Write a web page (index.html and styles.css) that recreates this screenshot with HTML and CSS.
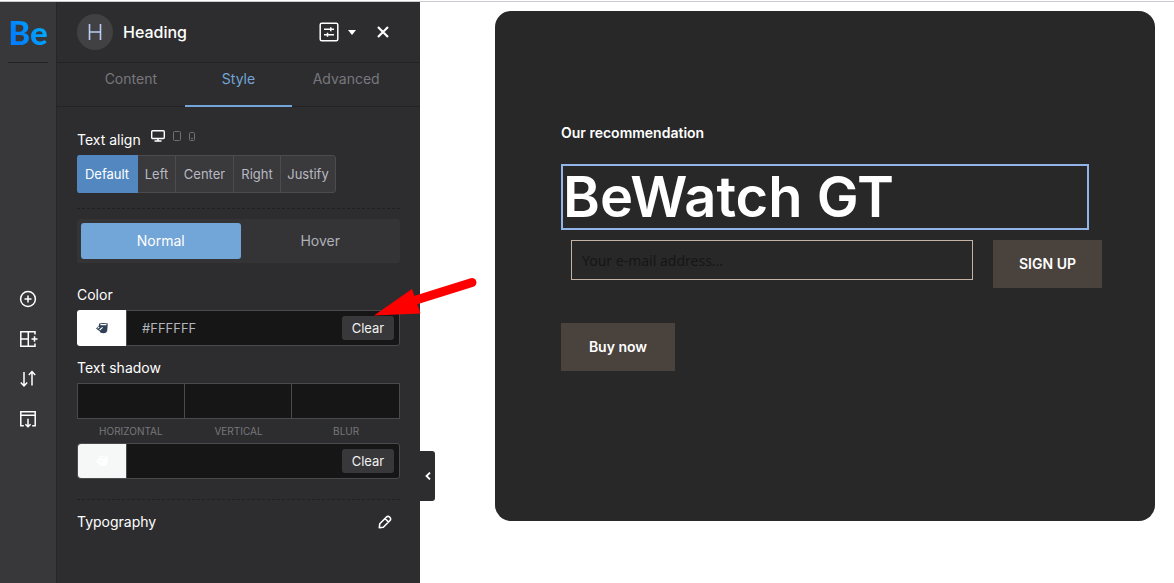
FILE: index.html
```html
<!DOCTYPE html>
<html lang="en">
<head>
<meta charset="utf-8">
<meta name="viewport" content="width=device-width, initial-scale=1">
<title>Heading – BeBuilder</title>
<link rel="stylesheet" href="styles.css">
</head>
<body>
<div class="app">
  <nav class="rail" aria-label="Builder">
    <a class="logo" href="#">Be</a>
    <div class="rail-items">
      <button class="rail-btn" type="button" aria-label="Add element">
        <svg class="icon" width="20" height="20" viewBox="0 0 20 20"><circle cx="10" cy="10" r="7.4"/><path d="M10 6.500v7M6.500 10h7"/></svg>
      </button>
      <button class="rail-btn" type="button" aria-label="Sections">
        <svg class="icon" width="20" height="20" viewBox="0 0 20 20"><path d="M17 5.500V2.800H2.800v14.400H17v-2.700M2.800 10h7.500M10.300 2.800v14.400M13.500 10h6M16.500 7.200v5.600"/></svg>
      </button>
      <button class="rail-btn" type="button" aria-label="Reorder">
        <svg class="icon" width="20" height="20" viewBox="0 0 20 20"><path d="M6 3v14M2.800 13.600L6 17l3.200-3.400M14 16.500V2.500M10.800 6L14 2.600 17.200 6"/></svg>
      </button>
      <button class="rail-btn" type="button" aria-label="Export">
        <svg class="icon" width="20" height="20" viewBox="0 0 20 20"><path d="M5.800 16.700H2.800V2.800h14.400v13.900h-3M2.800 6.200h14.400M10 9.800v7.800M7.400 15.200l2.600 2.600 2.600-2.600"/></svg>
      </button>
    </div>
  </nav>

  <aside class="panel">
    <header class="panel-head">
      <span class="badge"><svg width="16" height="18" viewBox="0 0 16 18"><path d="M2.500 1v16M13.500 1v16M2.500 9h11"/></svg></span>
      <h2 class="panel-title">Heading</h2>
      <button class="head-btn" type="button" aria-label="Presets">
        <svg class="icon" width="20" height="20" viewBox="0 0 20 20"><rect x="1.200" y="1.200" width="17.600" height="17.600" rx="1.500"/><path d="M5 7.200h10M11.800 5.200v4M5 12.800h10M8.500 10.800v4"/></svg>
        <svg width="8" height="5" viewBox="0 0 8 5"><path d="M0 0h8L4 5z" fill="#fff"/></svg>
      </button>
      <button class="close-btn" type="button" aria-label="Close">
        <svg width="12" height="12" viewBox="0 0 12 12"><path d="M1 1l10 10M11 1L1 11" stroke="#fff" stroke-width="2.200"/></svg>
      </button>
    </header>

    <div class="tabs" role="tablist">
      <button class="tab" role="tab" type="button">Content</button>
      <button class="tab tab-active" role="tab" type="button" aria-selected="true">Style</button>
      <button class="tab" role="tab" type="button">Advanced</button>
    </div>

    <div class="panel-body">
      <div class="label-row">
        <span class="label">Text align</span>
        <span class="devices">
          <svg class="device device-on" width="14" height="12" viewBox="0 0 14 12"><rect x=".7" y=".7" width="12.600" height="7.800" rx="1"/><path d="M7 8.500v2.500M3.500 11h7" stroke-width="1.600"/></svg>
          <svg class="device" width="8" height="12" viewBox="0 0 8 12"><rect x=".5" y="1.500" width="7" height="9" rx="1"/></svg>
          <svg class="device" width="6" height="12" viewBox="0 0 6 12"><rect x=".5" y="2.500" width="5" height="8" rx="1"/><path d="M2 8.500h2"/></svg>
        </span>
      </div>
      <div class="segments" role="group" aria-label="Text align">
        <button class="seg seg-active" type="button">Default</button>
        <button class="seg" type="button">Left</button>
        <button class="seg" type="button">Center</button>
        <button class="seg" type="button">Right</button>
        <button class="seg" type="button">Justify</button>
      </div>

      <hr class="divider">

      <div class="states">
        <button class="state state-active" type="button">Normal</button>
        <button class="state" type="button">Hover</button>
      </div>

      <label class="label" for="color">Color</label>
      <div class="color-field">
        <button class="swatch" type="button" aria-label="Pick color">
          <svg width="14" height="12" viewBox="0 0 14 12"><path d="M4.200 1.500Q8 .3 12.800 1.500L12.200 9Q11.500 11.300 8.500 11.300 5 11.200 4.600 9L3.600 8.600 1 6.500 3.800 3.800z" fill="currentColor"/><path d="M5.400 2.600h6M4.600 8L7.600 5.400M2.600 6.300l1.600-1.500" fill="none" stroke="#fff" stroke-width="1.100"/></svg>
        </button>
        <input class="color-input" id="color" type="text" value="#FFFFFF">
        <button class="clear" type="button">Clear</button>
      </div>

      <span class="label label-shadow">Text shadow</span>
      <div class="shadow-grid">
        <div class="shadow-cell"><input class="num" id="sh-h" type="text"><label class="caption" for="sh-h">HORIZONTAL</label></div>
        <div class="shadow-cell"><input class="num" id="sh-v" type="text"><label class="caption" for="sh-v">VERTICAL</label></div>
        <div class="shadow-cell"><input class="num" id="sh-b" type="text"><label class="caption" for="sh-b">BLUR</label></div>
      </div>
      <div class="color-field">
        <button class="swatch swatch-empty" type="button" aria-label="Pick shadow color">
          <svg width="14" height="12" viewBox="0 0 14 12"><path d="M4.200 1.500Q8 .3 12.800 1.500L12.200 9Q11.500 11.300 8.500 11.300 5 11.200 4.600 9L3.600 8.600 1 6.500 3.800 3.800z" fill="currentColor"/><path d="M5.400 2.600h6M4.600 8L7.600 5.400M2.600 6.300l1.600-1.500" fill="none" stroke="#f6f8f8" stroke-width="1.100"/></svg>
        </button>
        <input class="color-input" type="text" aria-label="Shadow color">
        <button class="clear" type="button">Clear</button>
      </div>

      <hr class="divider divider-low">

      <button class="typo" type="button">Typography
        <svg class="typo-icon" width="14" height="14" viewBox="0 0 14 14"><path d="M1.300 12.700l.5-4L8.500 2a2.100 2.100 0 0 1 3 0l.5.5a2.100 2.100 0 0 1 0 3L5.300 12.200zM7 3.500L10.500 7"/></svg>
      </button>
    </div>

    <button class="collapse" type="button" aria-label="Collapse panel">
      <svg width="6" height="8" viewBox="0 0 6 8"><path d="M5 .6L1.500 4 5 7.400" fill="none" stroke="#fff" stroke-width="1.800"/></svg>
    </button>
    <svg class="pointer" width="110" height="44" viewBox="0 0 110 44" aria-hidden="true"><path d="M46 25L102 7.500" stroke="#f00" stroke-width="9" stroke-linecap="round"/><path d="M4 40.500L42 14l8.500 24.500z" fill="#f00"/></svg>
  </aside>

  <main class="canvas">
    <section class="card">
      <p class="eyebrow">Our recommendation</p>
      <h1 class="title">BeWatch GT</h1>
      <form class="signup">
        <input class="email" type="email" placeholder="Your e-mail address..." aria-label="E-mail address">
        <button class="cta cta-signup" type="submit">SIGN UP</button>
      </form>
      <button class="cta cta-buy" type="button">Buy now</button>
    </section>
  </main>
</div>
</body>
</html>
```
FILE: styles.css
```css
* { box-sizing: border-box; }

body {
  margin: 0;
  padding-top: 1px;
  background: #fff;
  color: #fff;
  font-family: Inter, "Liberation Sans", sans-serif;
  font-size: 14px;
  line-height: 20px;
}

button, input { font: inherit; color: inherit; }
button { border: 0; padding: 0; background: none; cursor: pointer; }
svg { display: block; }

.app {
  display: flex;
  min-height: calc(100vh - 1px);
  border-top: 1px solid #c8cbcf;
}

.icon { fill: none; stroke: #fff; stroke-width: 1.5; }

/* Left rail */
.rail {
  flex: 0 0 57px;
  min-width: 0;
  padding: 0 8px;
  background: #38383a;
  border-right: 1px solid #262628;
}
.logo {
  display: block;
  height: 61px;
  border-bottom: 1px solid #232324;
  font: 900 33px/60px Lato, sans-serif;
  text-align: center;
  text-decoration: none;
  background: linear-gradient(60deg, #0080ff 30%, #00aaff 75%);
  background-clip: text;
  -webkit-background-clip: text;
  color: transparent;
}
.rail-items {
  display: flex;
  flex-direction: column;
  margin-top: 216px;
}
.rail-btn { display: grid; place-items: center; height: 40px; }

/* Settings panel */
.panel {
  position: relative;
  flex: 0 0 363px;
  min-width: 0;
  background: #2d2d2f;
}
.panel-head {
  display: flex;
  align-items: center;
  height: 61px;
  padding: 0 31px 0 20px;
  border-bottom: 1px solid #232324;
}
.badge {
  display: grid;
  place-items: center;
  width: 36px;
  height: 36px;
  border-radius: 50%;
  background: #414143;
}
.badge path { fill: none; stroke: #b9cbf5; stroke-width: 1.6; }
.panel-title { flex: 1; margin: 0 0 0 10px; font-size: 16px; font-weight: 500; }
.head-btn { display: flex; align-items: center; gap: 9px; margin-right: 21px; }

.tabs {
  display: grid;
  grid-template-columns: repeat(3, minmax(0, 1fr));
  padding: 0 20px;
  border-bottom: 1px solid #232324;
}
.tab {
  height: 44px;
  margin-bottom: -1px;
  padding-bottom: 10px;
  border-bottom: 2px solid transparent;
  color: #77777d;
}
.tab-active { color: #72a5d8; border-color: #72a5d8; }

.panel-body { padding: 23px 20px 20px; }
.label { display: block; }
.label-row { display: flex; gap: 10px; }
.devices { display: flex; gap: 8px; }
.device { fill: none; stroke: #707074; stroke-width: 1; }
.device-on { stroke: #fff; stroke-width: 1.4; }

.segments {
  display: grid;
  grid-template-columns: 61px 38px 58px 47px 55px;
  width: max-content;
  height: 38px;
  margin-top: 5px;
  overflow: hidden;
  border-radius: 3px;
}
.seg {
  border: 1px solid #4c4c4f;
  border-left: 0;
  background: #3a3a3c;
  color: #b9b9c2;
  font-size: 13px;
}
.seg:last-child { border-radius: 0 3px 3px 0; }
.seg-active { border-color: #5288bf; background: #5288bf; color: #fff; }

.divider { margin: 15px 0 10px; border: 0; border-top: 1px dashed #202022; }
.divider-low { margin: 20px 0 12px; }

.states {
  display: grid;
  grid-template-columns: 1fr 1fr;
  margin-bottom: 22px;
  padding: 4px 0 4px 4px;
  border-radius: 3px;
  background: #343436;
}
.state { height: 36px; border-radius: 3px; color: #b0b0b8; }
.state-active { background: #72a5d8; color: #fff; }

.color-field {
  display: flex;
  align-items: center;
  height: 36px;
  border: 1px solid #4a4a4d;
  border-radius: 3px;
  background: #161616;
}
.label + .color-field { margin-top: 5px; }
.swatch {
  display: grid;
  place-items: center;
  flex: 0 0 50px;
  height: 36px;
  margin-left: -1px;
  border-right: 1px solid #4a4a4d;
  border-radius: 3px 0 0 3px;
  background: #fff;
  color: #304055;
}
.swatch-empty { flex-basis: 49px; height: 34px; margin-left: 0; background: #f6f8f8; color: #fff; }
.color-input {
  flex: 1;
  min-width: 0;
  padding: 0 15px;
  border: 0;
  outline: 0;
  background: transparent;
  color: #b5b5be;
  font-size: 13px;
}
.clear {
  flex: 0 0 52px;
  height: 24px;
  margin-right: 5px;
  border-radius: 3px;
  background: #38383a;
  color: #f0f0f0;
  font-size: 13px;
}

.label-shadow { margin-top: 12px; }
.shadow-grid { display: grid; grid-template-columns: repeat(3, minmax(0, 1fr)); margin: 5px 0 2px; }
.shadow-cell { display: flex; flex-direction: column; gap: 2px; }
.num {
  width: 100%;
  height: 36px;
  padding: 0 10px;
  border: 1px solid #4a4a4d;
  background: #161616;
}
.shadow-cell + .shadow-cell .num { border-left: 0; }
.caption { color: #77777b; font-size: 10px; text-align: center; }

.typo {
  display: flex;
  align-items: center;
  justify-content: space-between;
  width: 100%;
  padding-right: 8px;
}
.typo-icon { fill: none; stroke: #fff; stroke-width: 1.6; stroke-linejoin: round; }

.collapse {
  position: absolute;
  top: 449px;
  left: 100%;
  display: grid;
  place-items: center;
  width: 15px;
  height: 50px;
  border-radius: 0 3px 3px 0;
  background: #2d2d2f;
}
.pointer { position: absolute; z-index: 2; top: 273px; left: 313px; fill: none; }

/* Page preview */
.canvas { flex: 1; min-width: 0; padding: 9px 19px 20px 75px; }
.card {
  padding: 112px 66px 150px;
  border-radius: 16px;
  background: #282828;
}
.eyebrow { margin: 0 0 21px; font-weight: 600; }
.title {
  margin: 0;
  border: 2px solid #93b4e8;
  font-size: 56px;
  font-weight: 600;
  line-height: 62px;
}
.signup {
  display: flex;
  align-items: flex-start;
  gap: 20px;
  margin: 10px -13px 35px 10px;
}
.email {
  flex: 1;
  min-width: 0;
  height: 40px;
  padding: 0 10px;
  border: 1px solid #c4b3a4;
  background: transparent;
  font-family: "Noto Sans", sans-serif;
  font-size: 14px;
}
.email::placeholder { color: #161616; opacity: 1; }
.cta { display: block; height: 48px; background: #49423d; font-weight: 600; }
.cta-signup { width: 109px; }
.cta-buy { width: 114px; }
```
